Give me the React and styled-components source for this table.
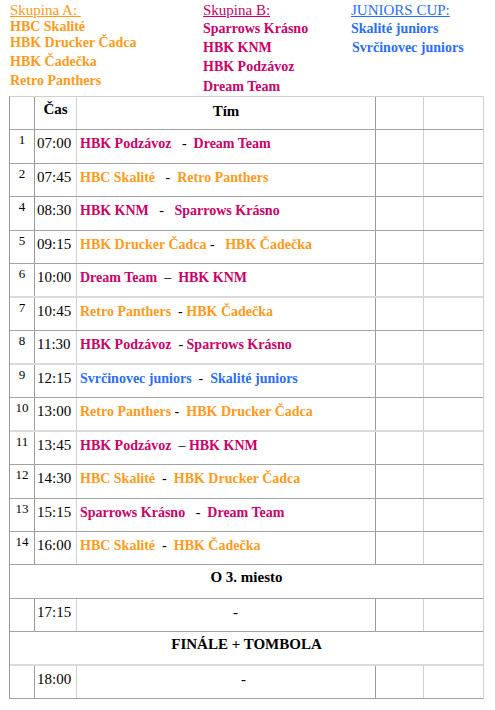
import React from 'react'
import styled, { createGlobalStyle } from 'styled-components'

const GlobalStyle = createGlobalStyle`
    body {
        margin: 0;
        background: #ffffff;
        font-family: "Liberation Serif", "Times New Roman", serif;
        color: #000;
    }
`

const colors = {
    a: '#ff9a1a',
    b: '#cc0066',
    j: '#2a6ef5',
}

const Page = styled.div`
    width: 495px;
    height: 710px;
    background: #fff;
`

const Groups = styled.div`
    height: 96px;
    padding-top: 1px;
    box-sizing: border-box;
    display: flex;
`

const Group = styled.div`
    width: ${props => props.w}px;
    padding-left: ${props => props.pl || 0}px;
    box-sizing: border-box;
`

const Heading = styled.div`
    font-size: 15px;
    line-height: 18px;
    color: ${props => colors[props.c]};
    text-decoration: underline;
    white-space: pre;
`

const Team = styled.div`
    font-size: 14px;
    font-weight: bold;
    line-height: ${props => props.h}px;
    color: ${props => colors[props.c]};
    padding-left: ${props => props.shift || 0}px;
    white-space: nowrap;
`

const Table = styled.div`
    margin-left: 9px;
    width: 473px;
    border-top: 1px solid #cfcfcf;
    border-left: 1px solid #9a9a9a;
    border-right: 1px solid #cfcfcf;
`

const Row = styled.div`
    display: grid;
    grid-template-columns: 25px 42px 299px 48px 1fr;
    height: ${props => props.h}px;
    box-sizing: border-box;
    border-bottom: ${props => (props.light ? '2px solid #dadada' : '1px solid #a3a3a3')};
`

const Cell = styled.div`
    border-right: 1px solid ${props => (props.dark ? '#9a9a9a' : '#d0d0d0')};
    &:last-child {
        border-right: none;
    }
`

const Num = styled(Cell)`
    font-size: 13px;
    line-height: 14px;
    padding-top: 3px;
    text-align: center;
`

const Time = styled(Cell)`
    font-size: 15px;
    line-height: 17px;
    padding-top: 5px;
    padding-left: 2px;
`

const HeadCell = styled(Cell)`
    font-size: 15px;
    font-weight: bold;
    line-height: 17px;
    padding-top: ${props => props.pt}px;
    text-align: center;
`

const Match = styled(Cell)`
    font-size: 14px;
    line-height: 17px;
    padding-top: 5px;
    padding-left: 3px;
    white-space: pre;
`

const Name = styled.span`
    font-weight: bold;
    color: ${props => colors[props.c]};
`

const Dash = styled(Cell)`
    font-size: 15px;
    line-height: 17px;
    padding-top: 5px;
    padding-left: ${props => props.shift}px;
`

const Span = styled.div`
    height: ${props => props.h}px;
    box-sizing: border-box;
    border-bottom: ${props => (props.light ? '2px solid #dadada' : '1px solid #a3a3a3')};
    text-align: center;
    font-size: 15px;
    font-weight: bold;
    line-height: 17px;
    padding-top: 4px;
`

const matches = [
    ['1', '07:00', 'HBK Podzávoz', '   -  ', 'Dream Team', 'b', 'b'],
    ['2', '07:45', 'HBC Skalité', '   -  ', 'Retro Panthers', 'a', 'a'],
    ['4', '08:30', 'HBK KNM', '   -   ', 'Sparrows Krásno', 'b', 'b'],
    ['5', '09:15', 'HBK Drucker Čadca', ' -   ', 'HBK Čadečka', 'a', 'a'],
    ['6', '10:00', 'Dream Team', '  –  ', 'HBK KNM', 'b', 'b'],
    ['7', '10:45', 'Retro Panthers', '  - ', 'HBK Čadečka', 'a', 'a'],
    ['8', '11:30', 'HBK Podzávoz', '  - ', 'Sparrows Krásno', 'b', 'b'],
    ['9', '12:15', 'Svrčinovec juniors', '  -  ', 'Skalité juniors', 'j', 'j'],
    ['10', '13:00', 'Retro Panthers', ' -  ', 'HBK Drucker Čadca', 'a', 'a'],
    ['11', '13:45', 'HBK Podzávoz', '  – ', 'HBK KNM', 'b', 'b'],
    ['12', '14:30', 'HBC Skalité', '  -  ', 'HBK Drucker Čadca', 'a', 'a'],
    ['13', '15:15', 'Sparrows Krásno', '   -  ', 'Dream Team', 'b', 'b'],
    ['14', '16:00', 'HBC Skalité', '  -  ', 'HBK Čadečka', 'a', 'a'],
]

// row boundaries measured from the top of the table
const edges = [96, 130, 164, 197, 231, 264, 298, 331, 365, 398, 432, 465, 499, 532, 565, 599, 632, 666, 699]
const lightAfter = [5, 7, 9, 16]
const h = i => edges[i + 1] - edges[i]

const App = () => {
    return (
        <Page>
            <GlobalStyle />
            <Groups>
                <Group w={203} pl={10}>
                    <Heading c="a">{'Skupina A: '}</Heading>
                    <Team c="a" h={16}>HBC Skalité</Team>
                    <Team c="a" h={16}>HBK Drucker Čadca</Team>
                    <Team c="a" h={22}>HBK Čadečka</Team>
                    <Team c="a" h={16}>Retro Panthers</Team>
                </Group>
                <Group w={147}>
                    <Heading c="b">Skupina B:</Heading>
                    <Team c="b" h={20}>Sparrows Krásno</Team>
                    <Team c="b" h={18}>HBK KNM</Team>
                    <Team c="b" h={20}>HBK Podzávoz</Team>
                    <Team c="b" h={20}>Dream Team</Team>
                </Group>
                <Group w={145} pl={1}>
                    <Heading c="j">JUNIORS CUP:</Heading>
                    <Team c="j" h={20}>Skalité juniors</Team>
                    <Team c="j" h={18} shift={1}>Svrčinovec juniors</Team>
                </Group>
            </Groups>
            <Table>
                <Row h={h(0) - 1}>
                    <Cell dark />
                    <HeadCell pt={4}>Čas</HeadCell>
                    <HeadCell dark pt={6}>Tím</HeadCell>
                    <Cell />
                    <Cell />
                </Row>
                {matches.map((m, i) => (
                    <Row key={m[1]} h={h(i + 1)} light={lightAfter.includes(i + 1)}>
                        <Num dark>{m[0]}</Num>
                        <Time>{m[1]}</Time>
                        <Match dark>
                            <Name c={m[5]}>{m[2]}</Name>
                            {m[3]}
                            <Name c={m[6]}>{m[4]}</Name>
                        </Match>
                        <Cell />
                        <Cell />
                    </Row>
                ))}
                <Span h={h(14)}>O 3. miesto</Span>
                <Row h={h(15)}>
                    <Cell dark />
                    <Time>17:15</Time>
                    <Dash dark shift={156}>-</Dash>
                    <Cell />
                    <Cell />
                </Row>
                <Span h={h(16)} light>FINÁLE + TOMBOLA</Span>
                <Row h={h(17)}>
                    <Cell dark />
                    <Time>18:00</Time>
                    <Dash dark shift={164}>-</Dash>
                    <Cell />
                    <Cell />
                </Row>
            </Table>
        </Page>
    )
}

export default App
